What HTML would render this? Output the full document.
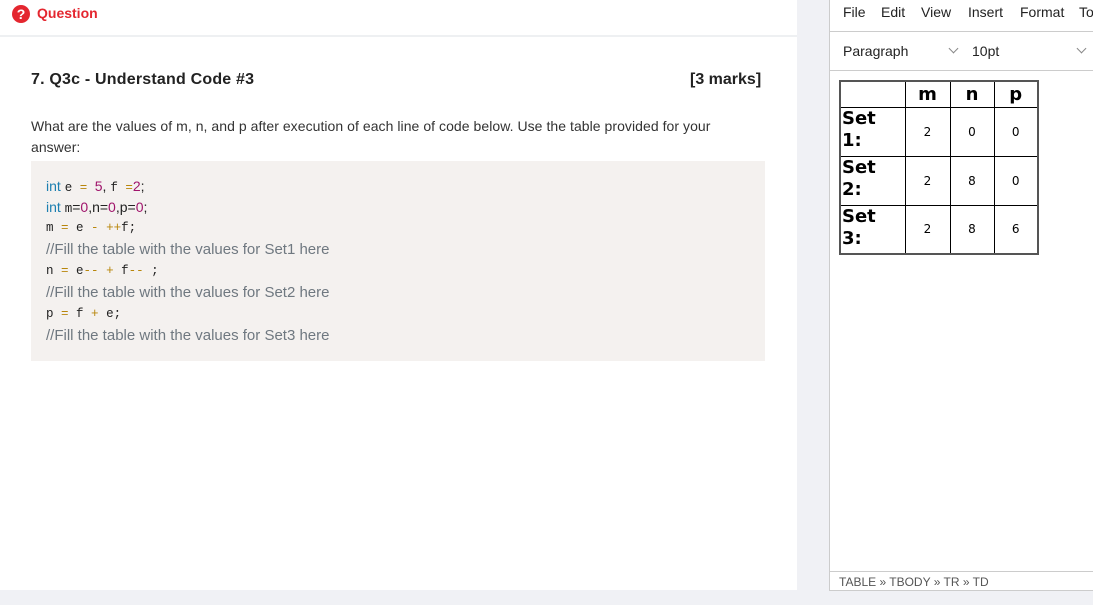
<!DOCTYPE html>
<html><head><style>
*{margin:0;padding:0;box-sizing:border-box}
body{width:1093px;height:605px;background:#f0f1f5;position:relative;overflow:hidden;font-family:"Liberation Sans",sans-serif}
.left{position:absolute;left:0;top:0;width:797px;height:590px;background:#fff}
.hdr{position:absolute;left:0;top:0;width:797px;height:37px;border-bottom:2px solid #eef0f2}
.qi{position:absolute;left:12px;top:5px;width:18px;height:18px;border-radius:50%;background:#e4262f;color:#fff;font-weight:bold;font-size:14px;text-align:center;line-height:18px}
.qt{position:absolute;left:37px;top:5px;color:#e4262f;font-weight:bold;font-size:14px}
.title{position:absolute;left:31px;top:71px;font-size:16px;font-weight:bold;color:#222;letter-spacing:0.2px}
.marks{position:absolute;left:690px;top:71px;font-size:16px;font-weight:bold;color:#222}
.desc{position:absolute;left:31px;top:116px;width:715px;font-size:14px;color:#333;line-height:21px;letter-spacing:0.05px}
.code{position:absolute;left:31px;top:161px;width:734px;height:200px;background:#f4f1ef}
.ln{position:absolute;left:15px;font-size:14px;white-space:pre;color:#222}
.mono{font-family:"Liberation Mono",monospace;font-size:12.5px}
.kw{color:#1c7fb0}.num{color:#a0146b}.op{color:#b8860b}.cm{color:#6f7880;font-size:15px}
.ed{position:absolute;left:829px;top:0;width:264px;height:591px;background:#fff;border-left:1px solid #ccc;border-bottom:1px solid #ccc}
.menu{position:absolute;top:4px;font-size:14px;color:#222}
.bar1{position:absolute;left:0;top:31px;width:264px;border-top:1px solid #ccc}
.bar2{position:absolute;left:0;top:70px;width:264px;border-top:1px solid #ccc}
.sb{position:absolute;left:0;top:571px;width:264px;border-top:1px solid #ccc}
.chev{position:absolute;width:7px;height:7px;border-right:1.3px solid #888;border-bottom:1.3px solid #888;transform:rotate(45deg)}
table{position:absolute;left:9px;top:80px;border-collapse:collapse;border:2px solid #555;font-family:"DejaVu Sans",sans-serif}
td{border:1px solid #000;text-align:center;font-size:12px;height:49px}
tr.h td{height:26px;font-weight:bold;font-size:18px}
td.s{text-align:left;font-weight:bold;font-size:18px;line-height:22px;vertical-align:top;padding-left:1px}
</style></head><body>
<div class="left">
<div class="hdr"><div class="qi">?</div><div class="qt">Question</div></div>
<div class="title">7. Q3c - Understand Code #3</div>
<div class="marks">[3 marks]</div>
<div class="desc">What are the values of m, n, and p after execution of each line of code below. Use the table provided for your answer:</div>
<div class="code">
<div class="ln" style="top:17px"><span class="kw">int</span> <span class="mono">e <span class="op">=</span> </span><span class="num">5</span>, <span class="mono">f <span class="op">=</span></span><span class="num">2</span>;</div>
<div class="ln" style="top:38px"><span class="kw">int</span> <span class="mono">m</span>=<span class="num">0</span>,n=<span class="num">0</span>,p=<span class="num">0</span>;</div>
<div class="ln mono" style="top:60px">m <span class="op">=</span> e <span class="op">-</span> <span class="op">++</span>f;</div>
<div class="ln cm" style="top:80px">//Fill the table with the values for Set1 here</div>
<div class="ln mono" style="top:103px">n <span class="op">=</span> e<span class="op">--</span> <span class="op">+</span> f<span class="op">--</span> ;</div>
<div class="ln cm" style="top:123px">//Fill the table with the values for Set2 here</div>
<div class="ln mono" style="top:146px">p <span class="op">=</span> f <span class="op">+</span> e;</div>
<div class="ln cm" style="top:166px">//Fill the table with the values for Set3 here</div>
</div>
</div>
<div class="ed">
<div class="menu" style="left:13px">File</div>
<div class="menu" style="left:51px">Edit</div>
<div class="menu" style="left:91px">View</div>
<div class="menu" style="left:138px">Insert</div>
<div class="menu" style="left:190px">Format</div>
<div class="menu" style="left:249px">To</div>
<div class="bar1"></div>
<div class="menu" style="left:13px;top:43px">Paragraph</div>
<div class="chev" style="left:120px;top:45px"></div>
<div class="menu" style="left:142px;top:43px">10pt</div>
<div class="chev" style="left:248px;top:45px"></div>
<div class="bar2"></div>
<table>
<tr class="h"><td style="width:65px"></td><td style="width:45px">m</td><td style="width:44px">n</td><td style="width:44px">p</td></tr>
<tr><td class="s">Set<br>1:</td><td>2</td><td>0</td><td>0</td></tr>
<tr><td class="s">Set<br>2:</td><td>2</td><td>8</td><td>0</td></tr>
<tr><td class="s">Set<br>3:</td><td>2</td><td>8</td><td>6</td></tr>
</table>
<div class="sb"></div>
<div style="position:absolute;left:9px;top:575px;font-size:12px;color:#555">TABLE » TBODY » TR » TD</div>
</div>
</body></html>
